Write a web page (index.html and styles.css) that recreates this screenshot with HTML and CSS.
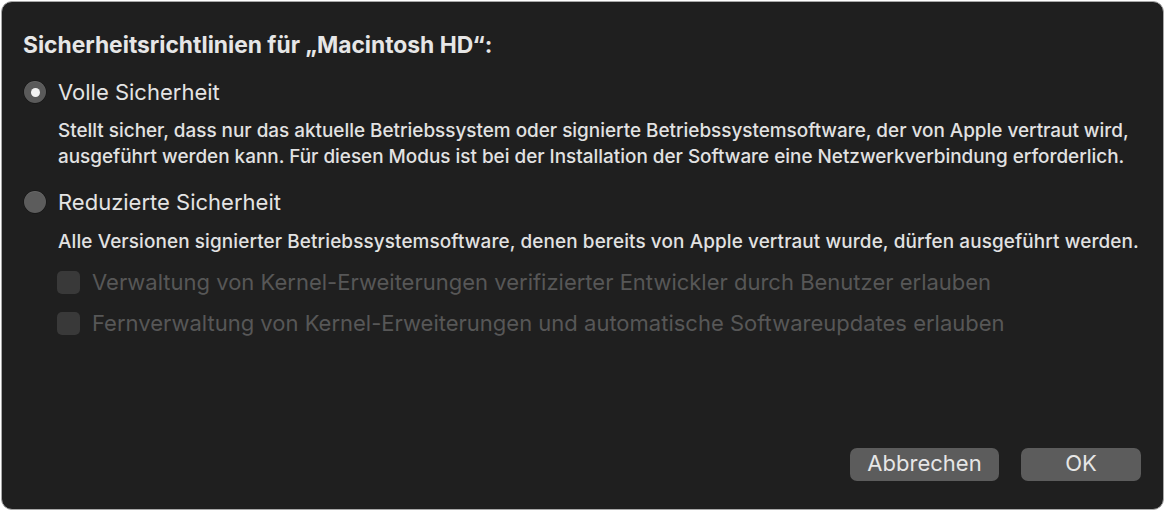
FILE: index.html
```html
<!DOCTYPE html>
<html lang="de">
<head>
<meta charset="utf-8">
<title>Sicherheitsrichtlinien</title>
<link rel="stylesheet" href="styles.css">
</head>
<body>
<div class="window">
  <h1 class="title">Sicherheitsrichtlinien für „Macintosh HD“:</h1>

  <div class="option">
    <span class="radio radio-on"><span class="dot"></span></span>
    <span class="option-label">Volle Sicherheit</span>
  </div>
  <p class="desc desc-full">Stellt sicher, dass nur das aktuelle Betriebssystem oder signierte Betriebssystemsoftware, der von Apple vertraut wird,<br>ausgeführt werden kann. Für diesen Modus ist bei der Installation der Software eine Netzwerkverbindung erforderlich.</p>

  <div class="option option-second">
    <span class="radio"></span>
    <span class="option-label">Reduzierte Sicherheit</span>
  </div>
  <p class="desc desc-reduced">Alle Versionen signierter Betriebssystemsoftware, denen bereits von Apple vertraut wurde, dürfen ausgeführt werden.</p>

  <div class="check check-first">
    <span class="box"></span>
    <span class="check-label">Verwaltung von Kernel-Erweiterungen verifizierter Entwickler durch Benutzer erlauben</span>
  </div>
  <div class="check check-second">
    <span class="box"></span>
    <span class="check-label">Fernverwaltung von Kernel-Erweiterungen und automatische Softwareupdates erlauben</span>
  </div>

  <div class="footer">
    <button class="btn btn-cancel">Abbrechen</button>
    <button class="btn btn-ok">OK</button>
  </div>
</div>
</body>
</html>
```
FILE: styles.css
```css
html, body {
  margin: 0;
  padding: 0;
  background: #ffffff;
}

body {
  font-family: Inter, "Noto Sans", "Liberation Sans", sans-serif;
  color: #dfdfdf;
}

.window {
  box-sizing: border-box;
  margin: 1px;
  width: 1163px;
  height: 509px;
  background: #1f1f1f;
  border: 1px solid #a8a8a8;
  border-radius: 11px;
  padding: 31px 22px 28px 22px;
  display: flex;
  flex-direction: column;
}

.title {
  margin: 0 0 0 -1px;
  font-size: 22.8px;
  line-height: 24px;
  font-weight: 700;
  color: #e6e6e6;
  white-space: nowrap;
}

.option {
  display: flex;
  align-items: center;
  height: 24px;
  margin-top: 23px;
}

.option-second {
  margin-top: 20px;
}

.radio {
  box-sizing: border-box;
  width: 22px;
  height: 22px;
  border-radius: 50%;
  background: #5c5c5c;
  box-shadow: inset 0 1px 0 rgba(255,255,255,0.08), 0 0 0 0.5px rgba(0,0,0,0.4);
  display: flex;
  align-items: center;
  justify-content: center;
  flex: none;
}

.radio-on {
  background: #5a5a5a;
}

.dot {
  width: 9px;
  height: 9px;
  border-radius: 50%;
  background: #f2f2f2;
}

.option-label {
  margin-left: 12px;
  font-size: 22px;
  line-height: 24px;
  color: #e4e4e4;
  white-space: nowrap;
}

.desc {
  margin: 14px 0 0 34px;
  font-size: 18.9px;
  line-height: 26px;
  font-weight: 500;
  color: #e2e2e2;
  white-space: nowrap;
}

.desc-reduced {
  margin-top: 15px;
  letter-spacing: 0.12px;
}

.check {
  display: flex;
  align-items: center;
  height: 24px;
  margin-left: 33px;
  margin-top: 15px;
}

.check-second {
  margin-top: 17px;
}

.box {
  box-sizing: border-box;
  width: 23px;
  height: 23px;
  border-radius: 5px;
  background: #393939;
  flex: none;
}

.check-label {
  margin-left: 12px;
  font-size: 22px;
  line-height: 24px;
  color: #575757;
  white-space: nowrap;
}

.footer {
  margin-top: auto;
  display: flex;
  justify-content: flex-end;
  gap: 22px;
}

.btn {
  font-family: inherit;
  height: 33px;
  border: none;
  border-radius: 7px;
  background: #5c5c5c;
  color: #e6e6e6;
  font-size: 22px;
  line-height: 30px;
  padding: 0 0 3px;
}

.btn-cancel {
  width: 149px;
}

.btn-ok {
  width: 120px;
}
```
